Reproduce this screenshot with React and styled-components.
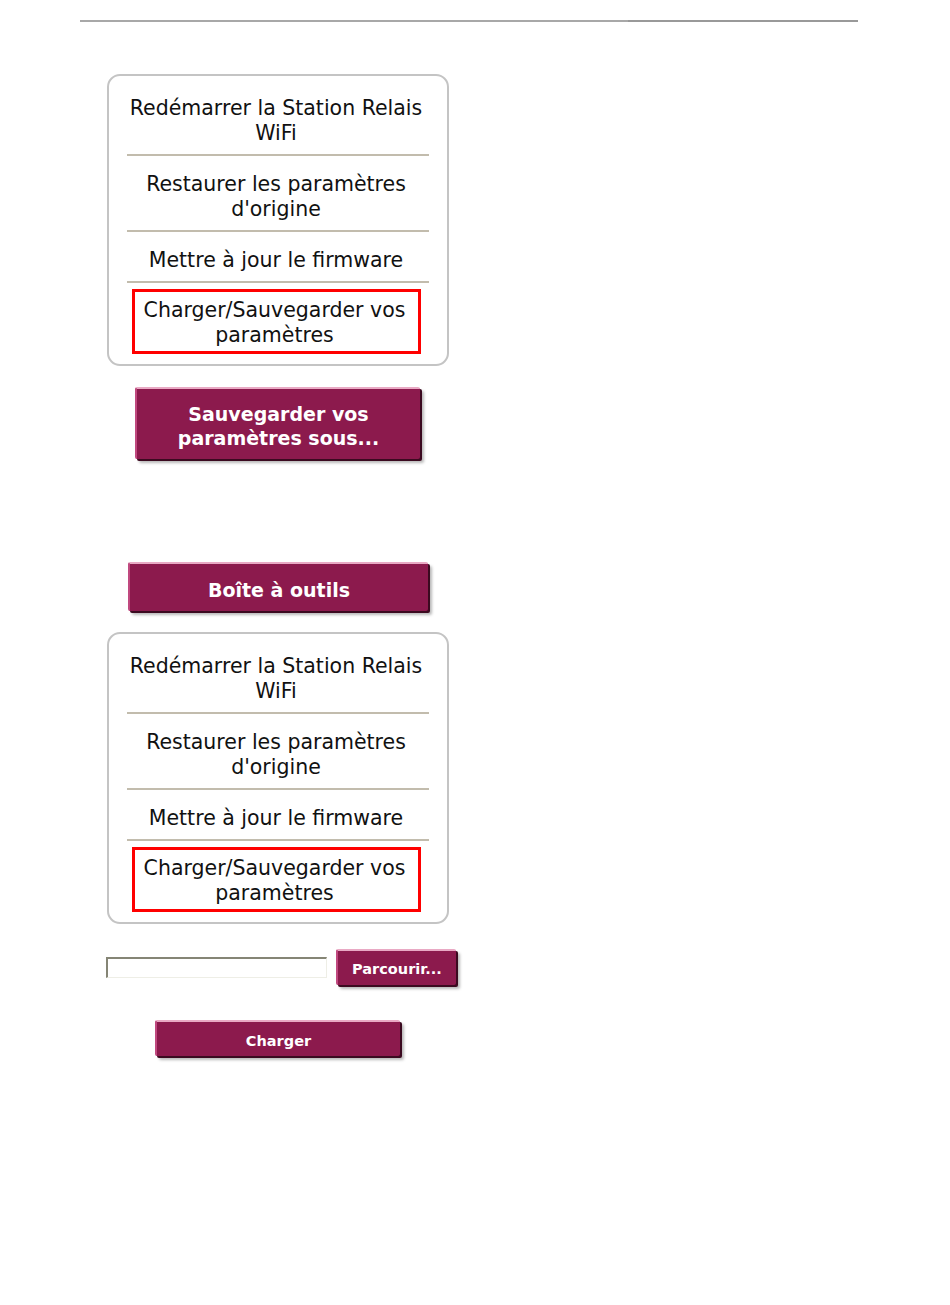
import styled, { createGlobalStyle } from 'styled-components';

const GlobalStyle = createGlobalStyle`
    body {
        margin: 0;
        background: #ffffff;
        font-family: "DejaVu Sans", Verdana, sans-serif;
    }
`;

const menuItems = [
    ["Redémarrer la Station Relais", "WiFi"],
    ["Restaurer les paramètres", "d'origine"],
    ["Mettre à jour le firmware"],
];

const Lines = ({ lines }) => lines.map((line, i) => (
    <Line key={i}>{line}</Line>
));

const ToolMenu = () => (
    <MenuBox>
        {menuItems.map((lines, i) => (
            <MenuItem key={i} first={i === 0}>
                <Lines lines={lines} />
            </MenuItem>
        ))}
        <Highlight>
            <Lines lines={["Charger/Sauvegarder vos", "paramètres"]} />
        </Highlight>
    </MenuBox>
);

const App = () => {
    return (
        <Page>
            <GlobalStyle />
            <TopRule>
                <RuleLeft />
                <RuleRight />
            </TopRule>
            <Column>
                <ToolMenu />
                <PlumButton width={285} height={72} size={19} offset={28} top={21} shift={3}>
                    Sauvegarder vos<br />paramètres sous...
                </PlumButton>
                <PlumButton width={300} height={49} size={19} offset={21} top={103} shift={4}>
                    Boîte à outils
                </PlumButton>
                <Spacer />
                <ToolMenu />
                <FileRow>
                    <FileInput type="text" readOnly />
                    <PlumButton width={120} height={36} size={14.5} offset={0} top={0} shift={2}>
                        Parcourir...
                    </PlumButton>
                </FileRow>
                <PlumButton width={245} height={36} size={14.5} offset={48} top={35} shift={3}>
                    Charger
                </PlumButton>
            </Column>
        </Page>
    );
};

const Page = styled.div`
    width: 950px;
    min-height: 1305px;
    padding-top: 20px;
    box-sizing: border-box;
`;

const TopRule = styled.div`
    display: flex;
    margin-left: 80px;
    width: 778px;
    height: 2px;
`;

const RuleLeft = styled.div`
    flex: 0 0 548px;
    background: #a8a8a8;
`;

const RuleRight = styled.div`
    flex: 1;
    background: #999999;
`;

const Column = styled.div`
    display: flex;
    flex-direction: column;
    align-items: flex-start;
    margin-left: 107px;
    margin-top: 52px;
`;

const MenuBox = styled.div`
    width: 342px;
    box-sizing: border-box;
    border: 2px solid #c4c4c4;
    border-radius: 13px;
    padding: 0 18px 10px 18px;
    display: flex;
    flex-direction: column;
`;

const MenuItem = styled.div`
    padding: ${p => (p.first ? '20px' : '16px')} 0 8px 0;
    border-bottom: 2px solid #c2bcad;
    color: #111111;
`;

const Line = styled.div`
    text-align: center;
    white-space: nowrap;
    font-size: 20.5px;
    line-height: 25px;
    margin-right: 4px;
`;

const Highlight = styled.div`
    margin: 6px 8px 0 5px;
    border: 3px solid #ff0000;
    padding: 6px 0 3px 0;
    color: #111111;
`;

const PlumButton = styled.button`
    width: ${p => p.width}px;
    height: ${p => p.height}px;
    margin-left: ${p => p.offset}px;
    margin-top: ${p => p.top}px;
    flex-shrink: 0;
    background: #8c1a4d;
    border: none;
    border-top: 2px solid #e9a9c4;
    border-left: 2px solid #c0497f;
    border-radius: 2px;
    box-shadow: 2px 2px 0 #3b0a20, 4px 4px 3px rgba(0, 0, 0, 0.28);
    color: #ffffff;
    font-family: "DejaVu Sans", Verdana, sans-serif;
    font-weight: bold;
    font-size: ${p => p.size}px;
    line-height: ${p => Math.round(p.size * 1.26)}px;
    text-align: center;
    padding: ${p => p.shift}px 0 0 0;
    cursor: pointer;
`;

const Spacer = styled.div`
    height: 21px;
`;

const FileRow = styled.div`
    display: flex;
    align-items: center;
    gap: 9px;
    margin-top: 25px;
    margin-left: -1px;
`;

const FileInput = styled.input`
    width: 221px;
    height: 21px;
    box-sizing: border-box;
    border: 1px solid #eeeee6;
    border-top: 2px solid #858575;
    border-left: 2px solid #858575;
    padding: 0;
    background: #ffffff;
`;

export default App;
